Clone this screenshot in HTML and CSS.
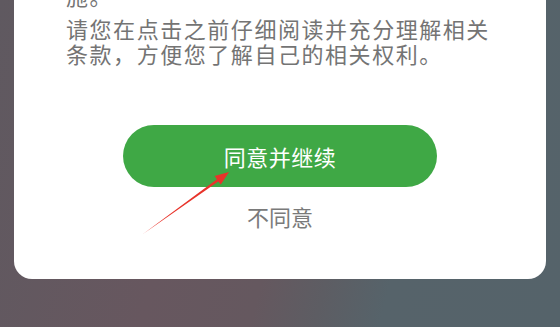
FILE: index.html
```html
<!DOCTYPE html>
<html lang="zh">
<head>
<meta charset="utf-8">
<title>协议</title>
<link rel="stylesheet" href="styles.css">
</head>
<body>
<div class="screen">
  <div class="card">
    <p class="prev">施。</p>
    <p class="desc">请您在点击之前仔细阅读并充分理解相关条款，方便您了解自己的相关权利。</p>
    <button class="agree">同意并继续</button>
    <div class="disagree">不同意</div>
  </div>
  <svg class="arrow" width="560" height="327" viewBox="0 0 560 327">
    <polygon points="143,234 218.3,181.6 220.8,184.6 229,172 214.6,176 216.9,179.2" fill="#e8332a"/>
  </svg>
</div>
</body>
</html>
```

FILE: styles.css
```css
html, body {
  margin: 0;
  padding: 0;
}
body {
  width: 560px;
  height: 327px;
  overflow: hidden;
  font-family: "Noto Sans CJK SC", "Noto Sans", sans-serif;
}
.screen {
  position: relative;
  width: 560px;
  height: 327px;
  background: linear-gradient(105deg, #5f5960 0%, #67575f 35%, #65585f 52%, #5d5d63 62%, #56636a 72%, #55636a 100%);
  overflow: hidden;
}
.card {
  margin: -18px 14px 0 14px;
  width: 532px;
  height: 297px;
  box-sizing: border-box;
  background: #ffffff;
  border-radius: 0 0 18px 18px;
  padding: 0 40px 0 52px;
  display: flex;
  flex-direction: column;
  align-items: flex-start;
}
.prev {
  margin: 0 0 8px 0;
  font-size: 22px;
  line-height: 26px;
  height: 26px;
  color: #747474;
  letter-spacing: 1.5px;
}
.desc {
  margin: 0;
  font-size: 22px;
  line-height: 25px;
  color: #747474;
  letter-spacing: 1.55px;
  width: 430px;
}
.agree {
  align-self: center;
  margin: 59px 0 0 -12px;
  width: 314px;
  height: 62px;
  border: none;
  border-radius: 31px;
  background: #3fa845;
  color: #ffffff;
  font-family: "Noto Sans CJK SC", "Noto Sans", sans-serif;
  font-size: 22px;
  letter-spacing: 0.5px;
  padding: 0;
}
.disagree {
  align-self: center;
  margin: 14px 0 0 -12px;
  height: 30px;
  line-height: 30px;
  font-size: 22px;
  color: #7a7a7a;
}
.arrow {
  position: absolute;
  left: 0;
  top: 0;
}
```
